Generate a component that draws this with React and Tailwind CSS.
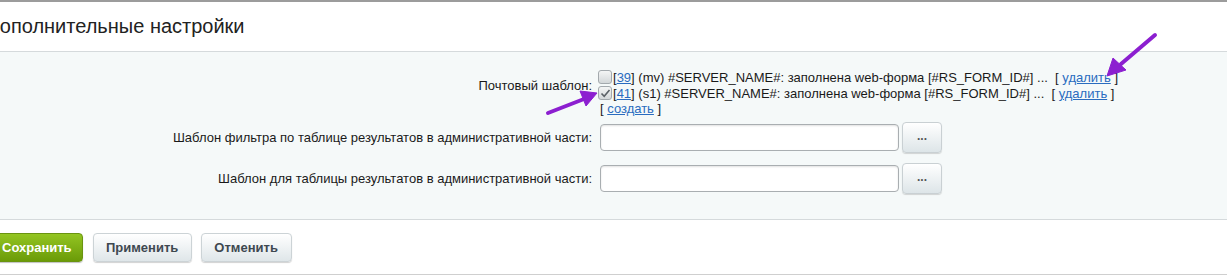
function Checkbox({ checked }) {
    return (
        <span className="inline-block w-[14px] h-[14px] rounded-[3px] border border-[#a3a9ad] bg-gradient-to-b from-[#f4f5f5] to-[#d3d7d9] mr-[1px] align-[-2px] relative">
            {checked && (
                <svg className="absolute left-[1px] top-[1px]" width="11" height="11" viewBox="0 0 11 11">
                    <path d="M1.5 5.5 L4.2 8.3 L9.5 2" fill="none" stroke="#5b6166" strokeWidth="1.6" />
                </svg>
            )}
        </span>
    );
}

function TemplateLine({ id, site, checked }) {
    return (
        <div className="h-[16px] leading-[16px] whitespace-nowrap">
            <Checkbox checked={checked} />
            [<a className="text-[#2a6cbf] underline">{id}</a>] ({site}) #SERVER_NAME#: заполнена web-форма [#RS_FORM_ID#] ...&nbsp; [&nbsp;<a className="text-[#2a6cbf] underline">удалить</a>&nbsp;]
        </div>
    );
}

function FieldRow({ label }) {
    return (
        <div className="flex items-center h-[41px]">
            <div className="w-[593px] text-right pr-[1px]">{label}</div>
            <div className="flex items-center pl-[7px] gap-[3px]">
                <div className="w-[299px] h-[27px] bg-white border border-[#a9aeb1] rounded-[4px] shadow-[inset_0_1px_2px_rgba(0,0,0,0.12)]" />
                <button className="w-[40px] h-[31px] rounded-[4px] border border-[#c9d0d3] bg-gradient-to-b from-white to-[#dde5e8] shadow-[0_1px_1px_rgba(0,0,0,0.15)] text-[#555] text-[12px] font-bold leading-none pb-[4px]">
                    ...
                </button>
            </div>
        </div>
    );
}

export default function App() {
    return (
        <div className="relative w-[1227px] h-[277px] bg-white overflow-hidden text-[13px] text-[#1a1a1a] font-['Liberation_Sans',Arial,sans-serif]">
            <div className="border-t-2 border-[#9c9c9c] h-[51px] flex items-center">
                <h2 className="-ml-[14px] text-[20px] text-[#222] pb-[1px]">Дополнительные настройки</h2>
            </div>
            <div className="border-t border-[#d5dadc] bg-[#f5f9f9] h-[168px] pt-[18px]">
                <div className="flex">
                    <div className="w-[593px] text-right pr-[1px] pt-[6px]">Почтовый шаблон:</div>
                    <div className="pl-[5px]">
                        <TemplateLine id="39" site="mv" />
                        <TemplateLine id="41" site="s1" checked />
                        <div className="h-[14px] leading-[14px] pl-[2px]">
                            [ <a className="text-[#2a6cbf] underline">создать</a> ]
                        </div>
                    </div>
                </div>
                <div className="pt-[1px]">
                    <FieldRow label="Шаблон фильтра по таблице результатов в административной части:" />
                    <FieldRow label="Шаблон для таблицы результатов в административной части:" />
                </div>
            </div>
            <div className="border-t border-[#d5dadc] h-[55px] flex items-center gap-[9px] -ml-[9px] pt-[1px]">
                <button className="h-[29px] px-[10px] rounded-[4px] bg-gradient-to-b from-[#93c521] to-[#6b9b07] border border-[#6a9410] text-white font-bold shadow-[0_1px_1px_rgba(0,0,0,0.25)]">
                    Сохранить
                </button>
                <button className="h-[29px] w-[99px] rounded-[4px] bg-gradient-to-b from-white to-[#dfe6e9] border border-[#ccd3d6] text-[#3e4850] font-bold shadow-[0_1px_1px_rgba(0,0,0,0.18)] ml-[1px]">
                    Применить
                </button>
                <button className="h-[29px] w-[91px] rounded-[4px] bg-gradient-to-b from-white to-[#dfe6e9] border border-[#ccd3d6] text-[#3e4850] font-bold shadow-[0_1px_1px_rgba(0,0,0,0.18)]">
                    Отменить
                </button>
            </div>
            <div className="border-t border-[#cfcfcf]" />
            <svg className="absolute inset-0 pointer-events-none" width="1227" height="277">
                <g fill="#8c1fd0" stroke="#8c1fd0">
                    <line x1="1155" y1="35" x2="1121" y2="64" strokeWidth="4" strokeLinecap="round" />
                    <polygon points="1107,76 1113,58 1126,70" strokeWidth="1" strokeLinejoin="round" />
                    <line x1="548" y1="113" x2="584" y2="99" strokeWidth="4" strokeLinecap="round" />
                    <polygon points="597,93 580,91 586,106" strokeWidth="1" strokeLinejoin="round" />
                </g>
            </svg>
        </div>
    );
}
